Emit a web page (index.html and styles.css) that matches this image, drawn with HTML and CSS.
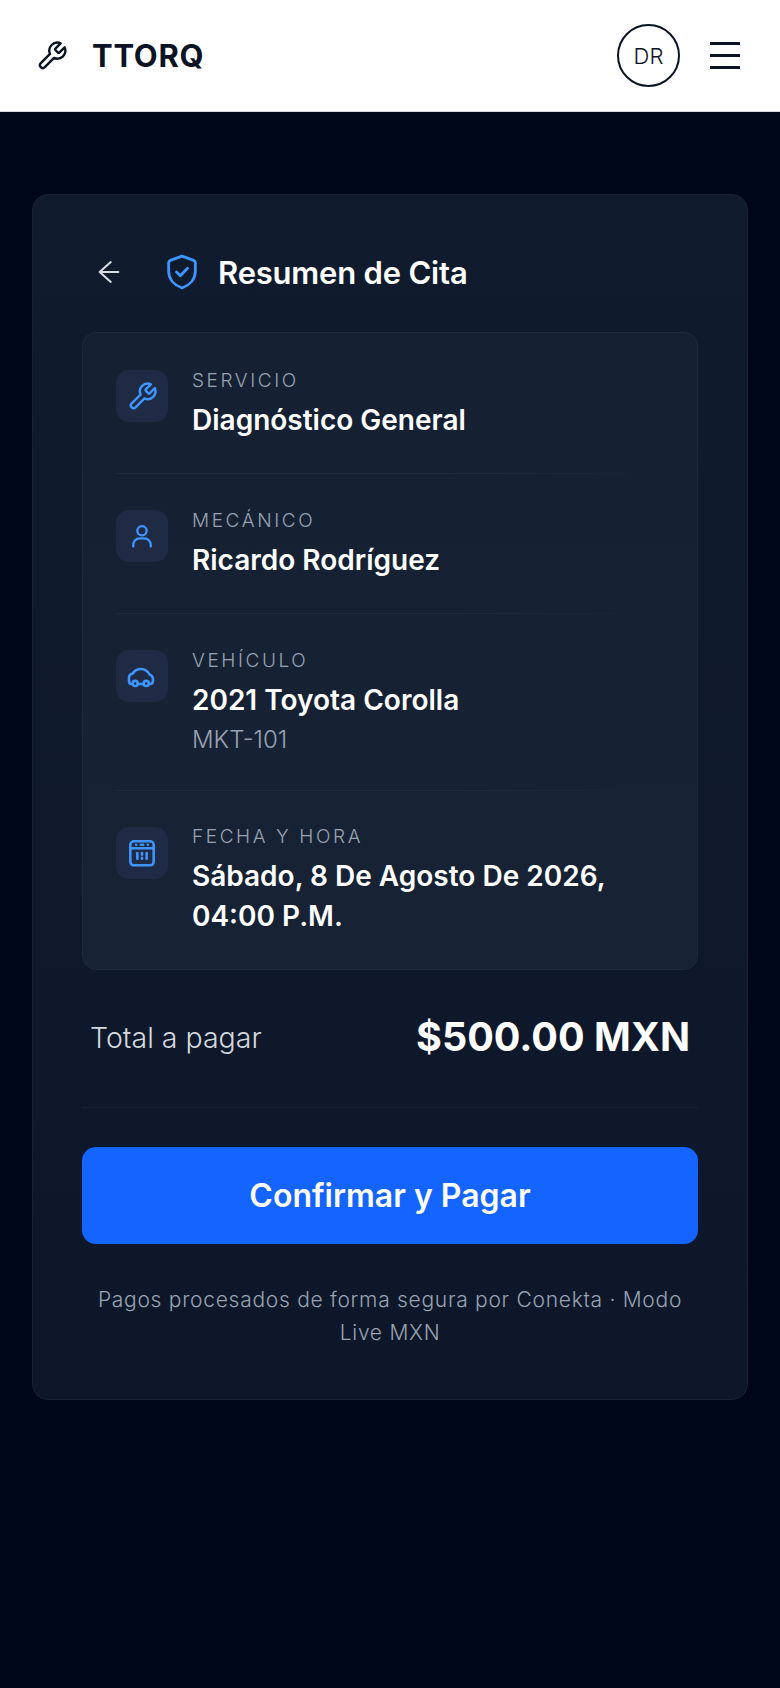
FILE: index.html
```html
<!DOCTYPE html>
<html lang="es">

<head>
    <meta charset="UTF-8">
    <title>TTORQ - Resumen de Cita</title>
    <link rel="stylesheet" href="styles.css">
</head>

<body>
    <header class="topbar">
        <div class="brand">
            <svg class="brand-icon" viewBox="0 0 24 24"><path d="M14.7 6.3a1 1 0 0 0 0 1.4l1.6 1.6a1 1 0 0 0 1.4 0l3.77-3.77a6 6 0 0 1-7.94 7.94l-6.91 6.91a2.12 2.12 0 0 1-3-3l6.91-6.91a6 6 0 0 1 7.94-7.94l-3.76 3.76z"/></svg>
            <span class="brand-name">TTORQ</span>
        </div>
        <div class="topbar-actions">
            <div class="avatar">DR</div>
            <div class="burger"><span></span><span></span><span></span></div>
        </div>
    </header>

    <main class="page">
        <section class="card">
            <div class="card-title">
                <svg class="back-icon" viewBox="0 0 24 24"><path d="M20 12H4M13.500 3.500L4 12l9.500 8.500"/></svg>
                <svg class="shield-icon" viewBox="0 0 24 24"><path d="M12 2.500l7 2.500q1 .4 1 1.400v5.100c0 5-3.500 8.500-8 10.100-4.500-1.600-8-5.100-8-10.100V6.400q0-1 1-1.400z"/><path d="M8.700 12l2.300 2.200 4.300-4.400"/></svg>
                <h1>Resumen de Cita</h1>
            </div>

            <div class="details">
                <div class="row">
                    <div class="row-icon">
                        <svg class="icon-wrench" viewBox="0 0 24 24"><path d="M14.700 6.300a1 1 0 0 0 0 1.400l1.600 1.600a1 1 0 0 0 1.400 0l3.770-3.770a6 6 0 0 1-7.940 7.940l-6.910 6.910a2.120 2.120 0 0 1-3-3l6.910-6.910a6 6 0 0 1 7.940-7.940l-3.760 3.760z"/></svg>
                    </div>
                    <div class="row-text">
                        <div class="row-label">SERVICIO</div>
                        <div class="row-value">Diagnóstico General</div>
                    </div>
                </div>
                <div class="row">
                    <div class="row-icon">
                        <svg viewBox="0 0 24 24"><circle cx="12" cy="7.500" r="4"/><path d="M4.500 21v-1.500a5.500 5.500 0 0 1 5.500-5.500h4a5.500 5.500 0 0 1 5.500 5.500V21"/></svg>
                    </div>
                    <div class="row-text">
                        <div class="row-label">MECÁNICO</div>
                        <div class="row-value">Ricardo Rodríguez</div>
                    </div>
                </div>
                <div class="row">
                    <div class="row-icon">
                        <svg class="icon-car" viewBox="0 0 24 24"><path d="M4.800 18H3.700C2.500 18 1.700 17 1.700 15.500V12.500C1.700 10.500 3 9.500 5 9 6.500 6.500 9 5.200 12 5.200c3.500 0 6 2.300 7.500 4.800 1.700.5 2.800 1.500 2.800 4.500 0 2.500-.8 3.500-2.300 3.500h-1"/><path d="M9.300 18h4.900"/><circle cx="7" cy="17.500" r="2.200"/><circle cx="16.500" cy="17.500" r="2.200"/></svg>
                    </div>
                    <div class="row-text">
                        <div class="row-label">VEHÍCULO</div>
                        <div class="row-value">2021 Toyota Corolla</div>
                        <div class="row-sub">MKT-101</div>
                    </div>
                </div>
                <div class="row">
                    <div class="row-icon">
                        <svg class="icon-calendar" viewBox="0 0 24 24"><rect x="2" y="2" width="20" height="20.500" rx="3"/><path d="M2 8h20M7 5h.01M17 5h.01M11 5h2M8 12v5M12 12v1.500M12 16v1M16 12v5"/></svg>
                    </div>
                    <div class="row-text">
                        <div class="row-label">FECHA Y HORA</div>
                        <div class="row-value">Sábado, 8 De Agosto De 2026, 04:00 P.M.</div>
                    </div>
                </div>
            </div>

            <div class="total">
                <span class="total-label">Total a pagar</span>
                <span class="total-amount">$500.00 MXN</span>
            </div>

            <button class="pay-btn">Confirmar y Pagar</button>

            <p class="note">Pagos procesados de forma segura por Conekta · Modo Live MXN</p>
        </section>
    </main>
</body>

</html>
```

FILE: styles.css
```css
* {
    box-sizing: border-box;
}
body {
    margin: 0;
    min-height: 1688px;
    background: #00061a;
    font-family: "Inter", "Liberation Sans", sans-serif;
    color: #ffffff;
}
svg {
    fill: none;
    stroke-linecap: round;
    stroke-linejoin: round;
}

.topbar {
    height: 112px;
    padding: 0 40px 0 36px;
    background: #ffffff;
    border-bottom: 1px solid #d5d8de;
    display: flex;
    align-items: center;
    justify-content: space-between;
}
.brand {
    display: flex;
    align-items: center;
}
.brand-icon {
    width: 32px;
    height: 32px;
    stroke: #0b1324;
    stroke-width: 1.8;
}
.brand-name {
    margin-left: 24px;
    font-size: 31px;
    font-weight: 700;
    letter-spacing: 0.7px;
    color: #0b1324;
}
.topbar-actions {
    display: flex;
    align-items: center;
    gap: 30px;
}
.avatar {
    width: 63px;
    height: 63px;
    border: 2px solid #0b1324;
    border-radius: 50%;
    display: flex;
    align-items: center;
    justify-content: center;
    font-size: 22px;
    font-weight: 300;
    color: #0b1324;
}
.burger {
    width: 30px;
    display: flex;
    flex-direction: column;
    gap: 9px;
}
.burger span {
    height: 3px;
    background: #0b1324;
}

.page {
    padding: 82px 32px 0;
}
.card {
    height: 1206px;
    padding: 50px 49px 0;
    background: linear-gradient(180deg, #101b2d, #0d1729);
    border: 1px solid #172234;
    border-radius: 16px;
}
.card-title {
    height: 48px;
    margin-top: 3px;
    display: flex;
    align-items: center;
}
.back-icon {
    width: 28px;
    height: 28px;
    margin-left: 13px;
    stroke: #d8dbe0;
    stroke-width: 1.8;
}
.shield-icon {
    width: 40px;
    height: 40px;
    margin-left: 39px;
    stroke: #3f95ff;
    stroke-width: 1.7;
}
.card-title h1 {
    margin: 0 0 0 16px;
    font-size: 31px;
    font-weight: 600;
    letter-spacing: -0.2px;
}

.details {
    margin-top: 36px;
    height: 638px;
    padding: 1px 33px 0;
    background: linear-gradient(180deg, #152033, #172235);
    border: 1px solid #1d293d;
    border-radius: 14px;
}
.row {
    display: flex;
    gap: 24px;
    padding: 36px 0 33px;
    border-bottom: 1px solid;
    border-image: linear-gradient(90deg, #1f2b40 60%, transparent) 1;
}
.row:last-child {
    border-bottom: 0;
}
.row:last-child .row-text {
    margin-top: -1px;
}
.row-icon {
    flex: none;
    width: 52px;
    height: 52px;
    background: #1f2b45;
    border-radius: 13px;
    display: flex;
    align-items: center;
    justify-content: center;
}
.row-icon svg {
    width: 28px;
    height: 28px;
    stroke: #3f95ff;
    stroke-width: 2;
}
.row-icon .icon-wrench {
    width: 31px;
    height: 31px;
    stroke-width: 1.9;
}
.row-icon .icon-car {
    margin: 2px 2px 0 0;
    stroke-width: 2.2;
}
.row-icon .icon-calendar {
    stroke-width: 2.2;
}
.row-label {
    font-size: 19px;
    line-height: 22px;
    font-weight: 300;
    letter-spacing: 2.6px;
    color: #9aa3b2;
}
.row-value {
    margin-top: 8px;
    font-size: 28px;
    line-height: 40px;
    font-weight: 600;
}
.row-sub {
    margin: 2px 0 -1px;
    font-size: 24px;
    line-height: 36px;
    font-weight: 300;
    color: #9aa3b2;
}

.total {
    margin-top: 43px;
    padding: 0 8px 46px;
    border-bottom: 1px solid #172234;
    display: flex;
    align-items: center;
    justify-content: space-between;
}
.total-label {
    font-size: 28.5px;
    font-weight: 300;
    color: #d4d8df;
}
.total-amount {
    font-size: 39.5px;
    font-weight: 700;
}

.pay-btn {
    display: block;
    width: 100%;
    height: 97px;
    margin-top: 39px;
    background: #1464ff;
    border: 0;
    border-radius: 14px;
    font-family: inherit;
    font-size: 32px;
    font-weight: 600;
    color: #ffffff;
}

.note {
    margin: 39px 0 0;
    padding: 0 10px;
    font-size: 21px;
    line-height: 33px;
    font-weight: 300;
    letter-spacing: 0.72px;
    text-align: center;
    color: #9aa3b2;
}
```
